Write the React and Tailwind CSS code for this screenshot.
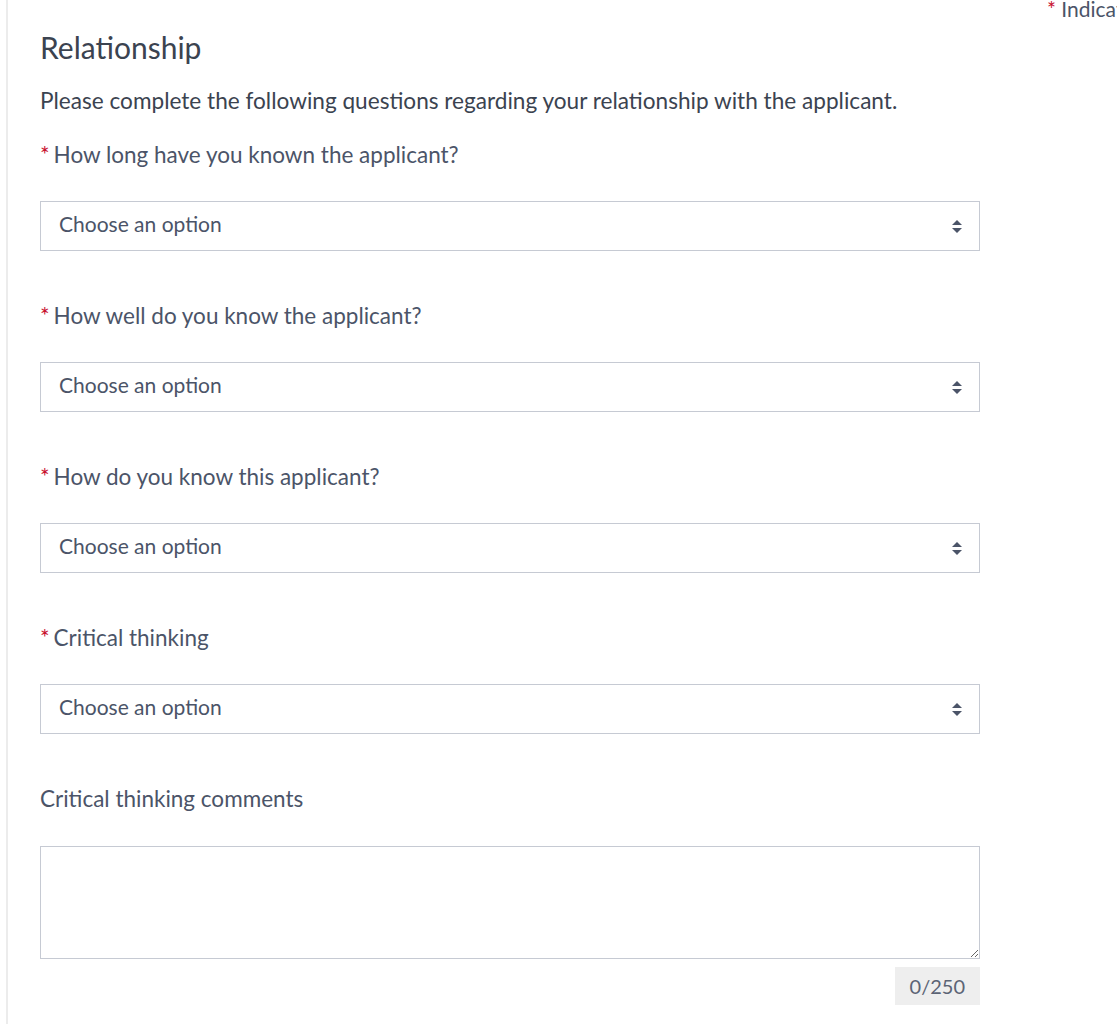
import React from "react";

const fields = [
  "How long have you known the applicant?",
  "How well do you know the applicant?",
  "How do you know this applicant?",
  "Critical thinking",
];

const SortIcon = () => (
  <svg width="12" height="16" viewBox="0 0 12 16" className="fill-[#4b5468]">
    <path d="M6 2 L11 7 H1 Z" />
    <path d="M6 15 L1 10 H11 Z" />
  </svg>
);

const SelectBox = () => (
  <div className="flex items-center justify-between h-[50px] w-[940px] border border-[#c6cad3] bg-white pl-[18px] pr-[16px]">
    <span className="text-[21px] leading-[26px] pb-[4px] text-[#4b5468]">Choose an option</span>
    <SortIcon />
  </div>
);

const App = () => {
  return (
    <div
      className="flex w-[1117px] h-[1024px] overflow-hidden bg-white text-[#4b5468]"
      style={{ fontFamily: "Lato, 'Open Sans', sans-serif" }}
    >
      <div className="w-[6px] shrink-0" />
      <div className="w-[1041px] shrink-0 border-l-2 border-[#ececec] pl-[32px] pt-[27px]">
        <h1 className="text-[30px] leading-[40px] text-[#3b4350]">Relationship</h1>
        <p className="mt-[20px] text-[22.6px] leading-[28px] text-[#3b4350]">
          Please complete the following questions regarding your relationship with the applicant.
        </p>

        <div className="mt-[26px] flex flex-col gap-[51px]">
          {fields.map((label) => (
            <div key={label}>
              <div className="text-[22.5px] leading-[28px]">
                <span className="text-[#c8102e] mr-[4px]">*</span>
                {label}
              </div>
              <div className="mt-[32px]">
                <SelectBox />
              </div>
            </div>
          ))}
        </div>

        <div className="mt-[51px] text-[22.5px] leading-[28px]">Critical thinking comments</div>
        <textarea className="mt-[33px] block w-[940px] h-[113px] border border-[#c6cad3] bg-white resize-y" />
        <div className="w-[940px] flex justify-end mt-[8px]">
          <span className="bg-[#eeeeee] px-[15px] h-[38px] leading-[38px] text-[20px] text-[#5c6475]">0/250</span>
        </div>
      </div>
      <div className="shrink-0 whitespace-nowrap text-[21px] leading-[20px] -mt-[1px]">
        <span className="text-[#c8102e]">*</span> Indicates required field
      </div>
    </div>
  );
};

export default App;
